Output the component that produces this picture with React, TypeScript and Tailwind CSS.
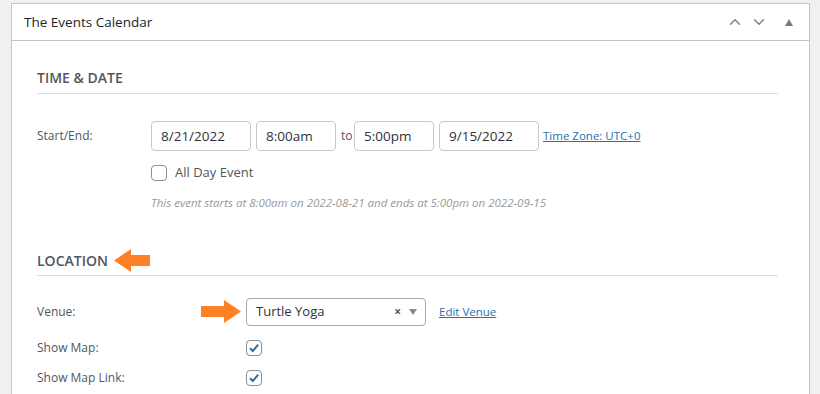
import { ChevronUp, ChevronDown } from "lucide-react";

const font = { fontFamily: '"Open Sans", "Noto Sans", sans-serif' };

function Arrow({ dir, w }: { dir: "left" | "right"; w: number }) {
    const head = 17;
    return (
        <svg width={w} height="23" viewBox={`0 0 ${w} 23`} className={dir === "right" ? "shrink-0" : "shrink-0 rotate-180"}>
            <path d={`M0 6 H${w - head} V0 L${w} 11.5 L${w - head} 23 V17 H0 Z`} fill="#fe8126" />
        </svg>
    );
}

function Check({ checked }: { checked?: boolean }) {
    return (
        <span className="w-4 h-4 shrink-0 rounded-[4px] border border-[#8c8f94] bg-white flex items-center justify-center">
            {checked && (
                <svg width="12" height="12" viewBox="0 0 12 12">
                    <path d="M2 6.2 L4.8 9 L10.2 2.6" stroke="#2271b1" strokeWidth="2" fill="none" />
                </svg>
            )}
        </span>
    );
}

function Field({ value, w }: { value: string; w: string }) {
    return (
        <div className={`${w} h-[30px] shrink-0 rounded-[4px] border border-[#c8c8c8] bg-white px-[9px] flex items-center text-[13.5px] text-[#2c3338]`}>
            {value}
        </div>
    );
}

export default function App() {
    return (
        <div className="w-[820px] h-[394px] overflow-hidden bg-[#f0f0f1] pl-[11px] pt-[3px]" style={font}>
            <div className="w-[799px] h-[420px] bg-white border border-[#c3c4c7]">
                {/* Header */}
                <div className="h-[37px] border-b border-[#c3c4c7] flex items-center pl-[12px] pr-[16px]">
                    <h2 className="text-[13.5px] text-[#1d2327] flex-1">The Events Calendar</h2>
                    <div className="flex items-center text-[#787c82]">
                        <ChevronUp size={18} strokeWidth={1.75} className="mr-[6px]" />
                        <ChevronDown size={18} strokeWidth={1.75} />
                        <span className="ml-[17px] w-0 h-0 border-l-[4px] border-r-[4px] border-b-[7px] border-l-transparent border-r-transparent border-b-[#787c82]" />
                    </div>
                </div>

                {/* Content */}
                <div className="pl-[25px] pr-[31px]">
                    {/* Time & Date */}
                    <div className="h-[53px] pt-[27px] border-b border-[#dcdcde]">
                        <h3 className="text-[14px] font-semibold text-[#50575e] leading-[20px]">TIME &amp; DATE</h3>
                    </div>
                    <div className="pt-[27px] flex items-center">
                        <span className="w-[114px] text-[12px] text-[#50575e]">Start/End:</span>
                        <div className="flex items-center gap-[5px]">
                            <Field value="8/21/2022" w="w-[100px]" />
                            <Field value="8:00am" w="w-[80px]" />
                            <span className="w-[8px] text-[12px] text-[#50575e] whitespace-nowrap">to</span>
                            <Field value="5:00pm" w="w-[80px]" />
                            <Field value="9/15/2022" w="w-[100px]" />
                            <a className="text-[11.5px] text-[#2271b1] underline -ml-[1px]">Time Zone: UTC+0</a>
                        </div>
                    </div>
                    <div className="pl-[114px] pt-[12px] flex items-center gap-[8px]">
                        <Check />
                        <span className="text-[13px] text-[#50575e]">All Day Event</span>
                    </div>
                    <p className="pl-[114px] pt-[11px] text-[11.5px] italic text-[#999]">
                        This event starts at 8:00am on 2022-08-21 and ends at 5:00pm on 2022-09-15
                    </p>

                    {/* Location */}
                    <div className="mt-[39px] pb-[3px] border-b border-[#dcdcde]">
                        <div className="h-[22px] flex items-center">
                            <h3 className="text-[14px] font-semibold text-[#50575e] leading-[20px]">LOCATION</h3>
                            <span className="ml-[6px] flex">
                                <Arrow dir="left" w={36} />
                            </span>
                        </div>
                    </div>
                    <div className="pt-[22px] flex items-center">
                        <span className="w-[164px] text-[12px] text-[#50575e]">Venue:</span>
                        <Arrow dir="right" w={40} />
                        <div className="ml-[5px] w-[180px] h-[28px] rounded-[4px] border border-[#a8a8a8] flex items-center pl-[9px] pr-[8px] text-[13px] text-[#2c3338]">
                            <span className="flex-1">Turtle Yoga</span>
                            <span className="text-[12px] text-[#555] font-bold mr-[8px]">×</span>
                            <span className="w-0 h-0 border-l-[4px] border-r-[4px] border-t-[6px] border-l-transparent border-r-transparent border-t-[#888]" />
                        </div>
                        <a className="ml-[13px] text-[11.5px] text-[#2271b1] underline">Edit Venue</a>
                    </div>
                    <div className="pt-[13px] flex items-center">
                        <span className="w-[209px] text-[12px] text-[#50575e]">Show Map:</span>
                        <Check checked />
                    </div>
                    <div className="pt-[12px] flex items-center">
                        <span className="w-[209px] text-[12px] text-[#50575e]">Show Map Link:</span>
                        <Check checked />
                    </div>
                </div>
            </div>
        </div>
    );
}
